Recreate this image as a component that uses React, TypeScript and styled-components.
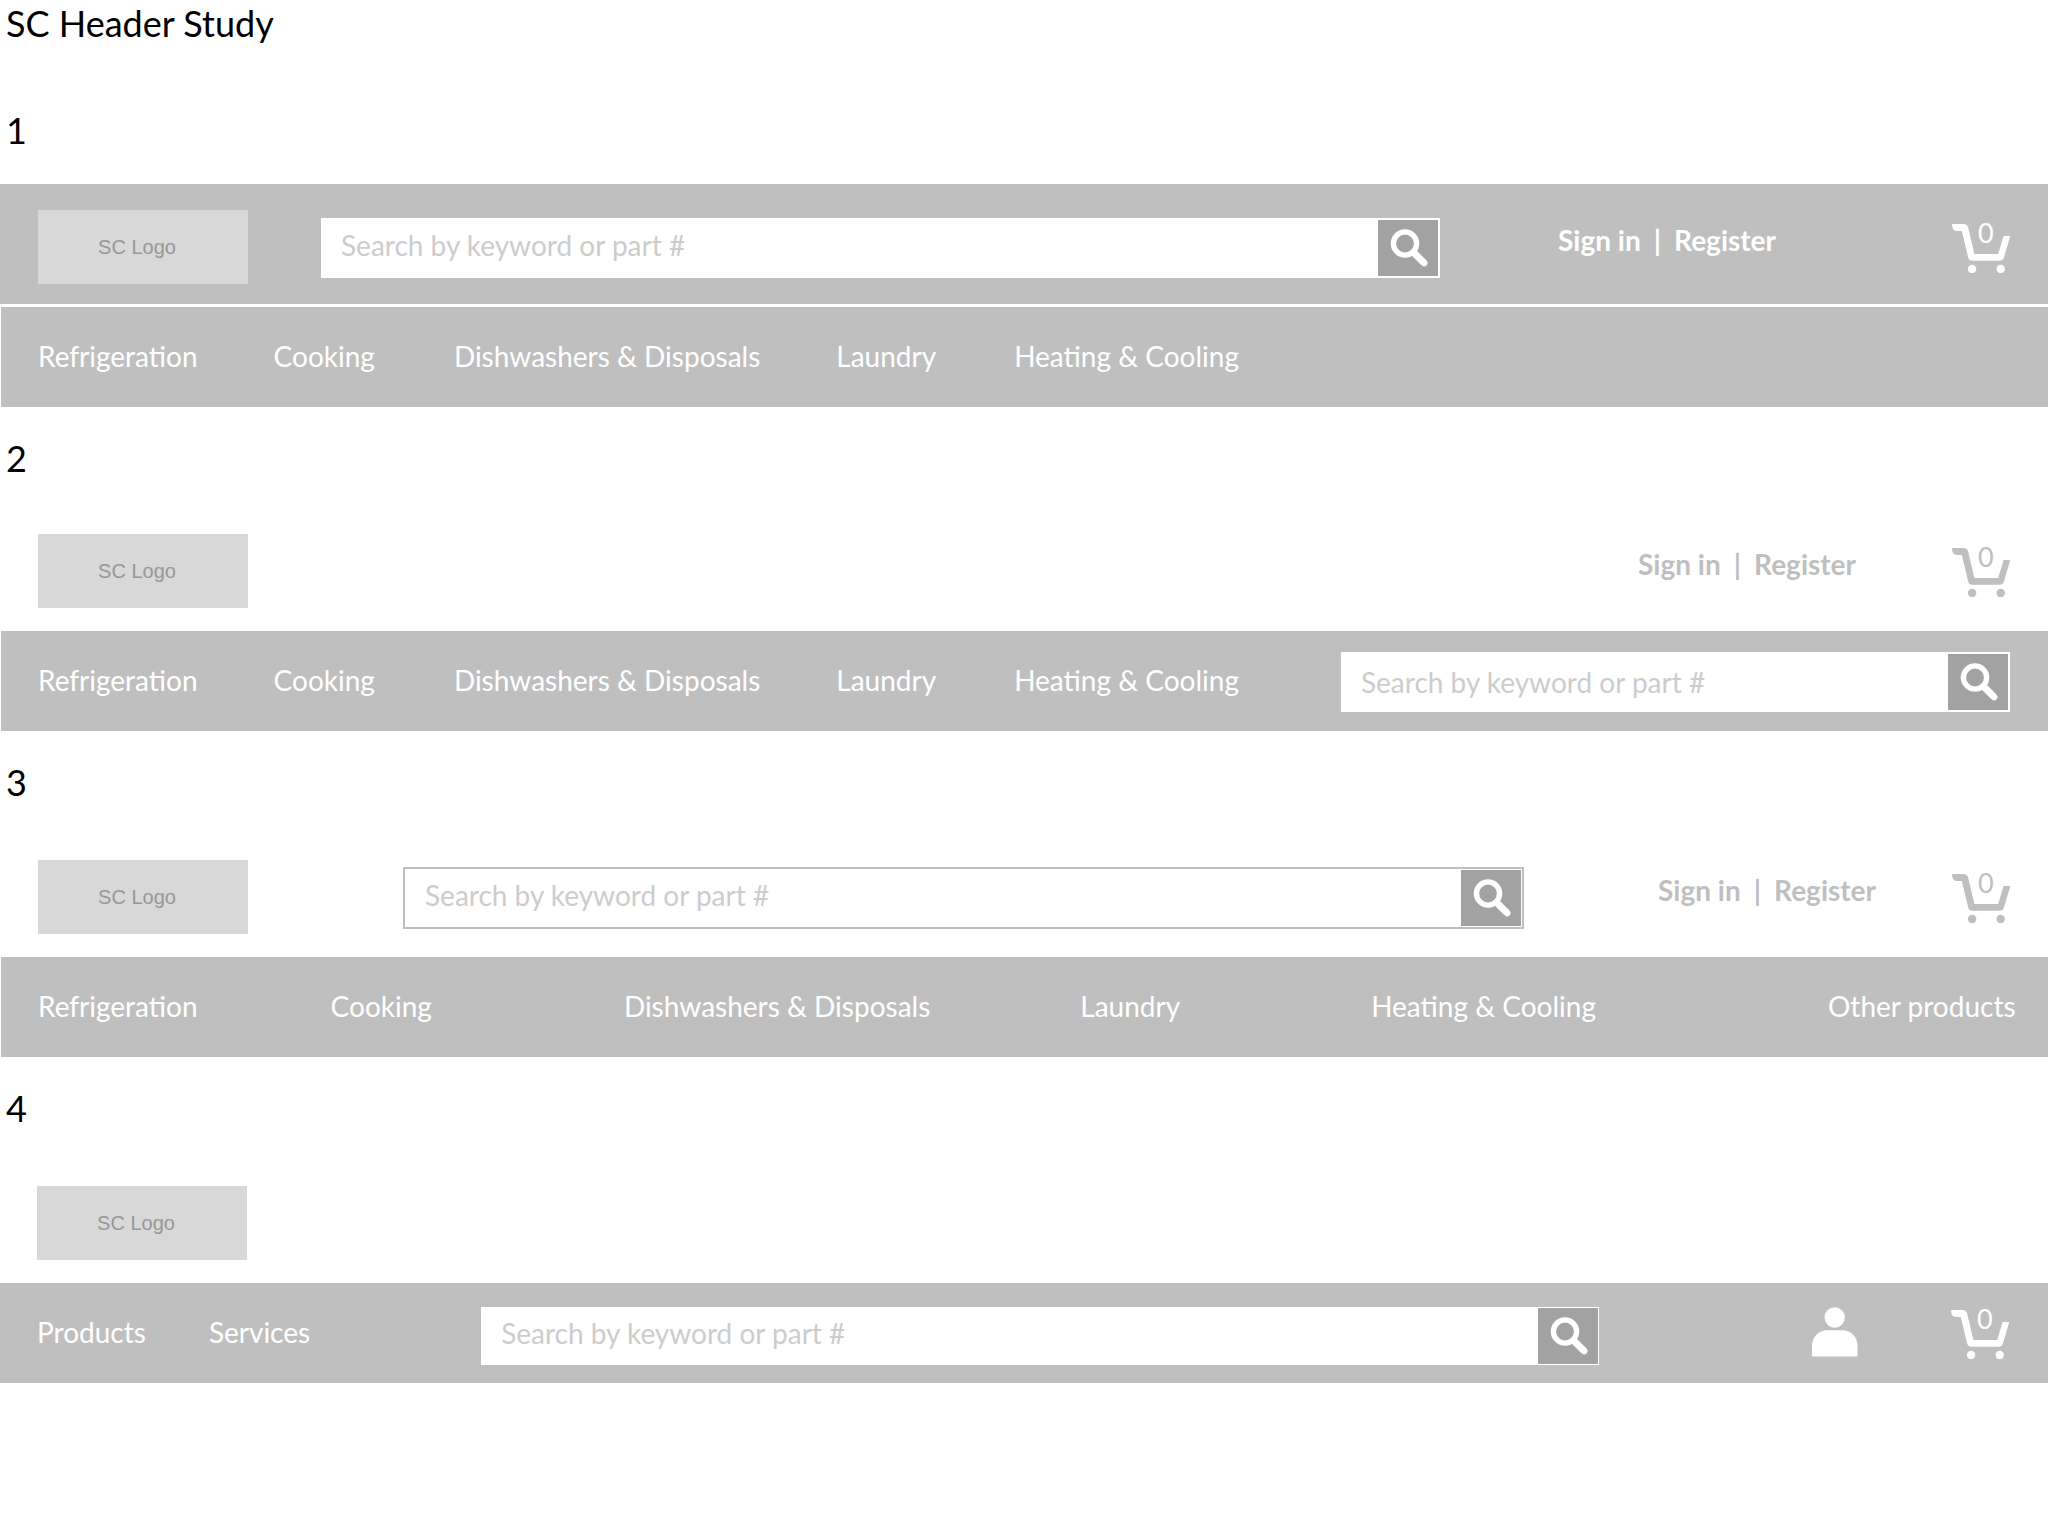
import React from "react";
import styled, { createGlobalStyle } from "styled-components";

const GlobalStyle = createGlobalStyle`
  *, *::before, *::after { box-sizing: border-box; }
  body {
    margin: 0;
    background: #ffffff;
    color: #000000;
    font-family: Lato, Carlito, "Open Sans", sans-serif;
  }
`;

const GREY = "#bfbfbf";
const WHITE = "#ffffff";

const Page = styled.main`
  display: flex;
  flex-direction: column;
  padding-bottom: 40px;
`;

const Title = styled.h1`
  margin: 0;
  padding-left: 6px;
  font-size: 36px;
  line-height: 46px;
  font-weight: 400;
`;

const Study = styled.section<{ $lead: number }>`
  padding-top: ${(p) => p.$lead}px;
`;

const StudyNumber = styled.h2<{ $after: number }>`
  margin: 0 0 ${(p) => p.$after}px;
  padding-left: 6px;
  font-size: 36px;
  line-height: 48px;
  font-weight: 400;
`;

const TopRow = styled.header<{ $filled?: boolean; $flush?: boolean }>`
  display: flex;
  align-items: center;
  height: 120px;
  padding: 26px 38px 20px ${(p) => (p.$flush ? 37 : 38)}px;
  color: ${(p) => (p.$filled ? WHITE : GREY)};
  background: ${(p) => (p.$filled ? GREY : "transparent")};
`;

const Logo = styled.a`
  display: flex;
  flex: none;
  align-items: center;
  justify-content: center;
  width: 210px;
  height: 74px;
  padding-right: 12px;
  background: #d8d8d8;
  color: #979797;
  font: 20px/24px "Liberation Sans", Arial, sans-serif;
  text-decoration: none;
`;

type FormVariant = "plain" | "outlined" | "compact";

const formShape = {
  plain: { height: 60, top: 2, padding: 2, border: "none" },
  outlined: { height: 62, top: 2, padding: 1, border: `2px solid ${GREY}` },
  compact: { height: 58, top: 6, padding: 1, border: "none" },
};

const SearchForm = styled.form<{ $left: number; $right: number; $variant: FormVariant }>`
  display: flex;
  flex: 1;
  min-width: 0;
  height: ${(p) => formShape[p.$variant].height}px;
  margin: ${(p) => formShape[p.$variant].top}px ${(p) => p.$right}px 0 ${(p) => p.$left}px;
  padding: ${(p) => formShape[p.$variant].padding}px;
  padding-left: 0;
  background: ${WHITE};
  border: ${(p) => formShape[p.$variant].border};
`;

const SearchInput = styled.input<{ $low?: boolean }>`
  flex: 1;
  min-width: 0;
  padding: ${(p) => (p.$low ? "0 20px" : "0 20px 6px")};
  border: 0;
  outline: 0;
  background: transparent;
  color: #666666;
  font: inherit;
  font-size: 28px;
  &::placeholder {
    color: #cccccc;
    opacity: 1;
  }
`;

const SearchButton = styled.button`
  flex: none;
  width: 60px;
  padding: 0;
  border: 0;
  background: #a2a2a2;
  color: ${WHITE};
  cursor: pointer;
  svg {
    display: block;
  }
`;

const Account = styled.div<{ $right: number }>`
  display: flex;
  gap: 13px;
  margin-left: auto;
  margin-right: ${(p) => p.$right}px;
  padding-bottom: 14px;
  font-size: 28px;
  line-height: 36px;
  font-weight: 700;
  white-space: nowrap;
  a {
    color: inherit;
    text-decoration: none;
  }
`;

const CartLink = styled.a`
  position: relative;
  flex: none;
  margin-top: 3px;
  color: inherit;
  text-decoration: none;
  svg {
    display: block;
  }
`;

const CartCount = styled.span`
  position: absolute;
  left: 26px;
  top: -9px;
  font-size: 27px;
  line-height: 36px;
`;

const ProfileLink = styled.a`
  margin: 0 93px 2px 0;
  color: inherit;
  svg {
    display: block;
  }
`;

const NavBar = styled.div<{ $flush?: boolean }>`
  display: flex;
  align-items: center;
  height: 100px;
  margin-top: 3px;
  margin-left: ${(p) => (p.$flush ? 0 : 1)}px;
  padding: 0 ${(p) => (p.$flush ? 39 : 38)}px 0 37px;
  background: ${GREY};
  color: ${WHITE};
`;

const NavList = styled.ul`
  display: flex;
  margin: 0;
  padding: 0 0 3px;
  list-style: none;
`;

const NavItem = styled.li<{ $before: number }>`
  margin-left: ${(p) => p.$before}px;
  font-size: 28px;
  line-height: 36px;
  white-space: nowrap;
  a {
    color: inherit;
    text-decoration: none;
  }
`;

const MagnifierIcon = () => (
  <svg width="60" height="56" viewBox="0 0 60 56" fill="none" stroke="currentColor" aria-hidden="true">
    <circle cx="27" cy="23.5" r="11.6" strokeWidth="5.4" />
    <path d="M36 33L45.6 42.4" strokeWidth="7" />
    <path d="M45.8 42.6L46.2 43" strokeWidth="6.6" strokeLinecap="round" />
  </svg>
);

const CartIcon = () => (
  <svg width="58" height="49" viewBox="0 0 58 49" fill="currentColor" aria-hidden="true">
    <path d="M0 0H11.5Q15.3 0 16.2 3.8L22.4 30H46.2L51.6 12H58.3L51.9 33.6Q51 36.8 47.5 36.8H20.4Q17 36.8 16.1 33.2L9.8 6.9H4.5Q0 6.9 0 0Z" />
    <circle cx="20.1" cy="45" r="4.2" />
    <circle cx="48.7" cy="45" r="4.2" />
  </svg>
);

const PersonIcon = () => (
  <svg width="46" height="50" viewBox="0 0 46 50" fill="currentColor" aria-hidden="true">
    <circle cx="22.7" cy="10.5" r="10.2" />
    <path d="M15.5 23.3H30C39 23.3 45.5 30 45.5 39V48.5Q45.5 49.5 44.5 49.5H1Q0 49.5 0 48.5V39C0 30 6.5 23.3 15.5 23.3Z" />
  </svg>
);

type SearchProps = {
  id: string;
  left: number;
  right: number;
  variant?: FormVariant;
  low?: boolean;
};

const Search = ({ id, left, right, variant = "plain", low }: SearchProps) => (
  <SearchForm
    role="search"
    $left={left}
    $right={right}
    $variant={variant}
    onSubmit={(e) => e.preventDefault()}
  >
    <SearchInput
      id={id}
      type="text"
      aria-label="Search"
      placeholder="Search by keyword or part #"
      $low={low}
    />
    <SearchButton type="submit" aria-label="Search">
      <MagnifierIcon />
    </SearchButton>
  </SearchForm>
);

const SignIn = ({ right }: { right: number }) => (
  <Account $right={right}>
    <a href="#signin">Sign in</a>
    <span>|</span>
    <a href="#register">Register</a>
  </Account>
);

const Cart = () => (
  <CartLink href="#cart" aria-label="Cart">
    <CartIcon />
    <CartCount>0</CartCount>
  </CartLink>
);

const Nav = ({ items }: { items: [string, number][] }) => (
  <nav>
    <NavList>
      {items.map(([label, before]) => (
        <NavItem key={label} $before={before}>
          <a href="#products">{label}</a>
        </NavItem>
      ))}
    </NavList>
  </nav>
);

const categories: [string, number][] = [
  ["Refrigeration", 0],
  ["Cooking", 76],
  ["Dishwashers & Disposals", 79],
  ["Laundry", 76],
  ["Heating & Cooling", 78],
];

const spreadCategories: [string, number][] = [
  ["Refrigeration", 0],
  ["Cooking", 133],
  ["Dishwashers & Disposals", 192],
  ["Laundry", 150],
  ["Heating & Cooling", 191],
  ["Other products", 232],
];

export default function App() {
  return (
    <>
      <GlobalStyle />
      <Page>
        <Title>SC Header Study</Title>

        <Study $lead={60}>
          <StudyNumber $after={30}>1</StudyNumber>
          <TopRow $filled>
            <Logo href="#home">SC Logo</Logo>
            <Search id="search-1" left={73} right={118} />
            <SignIn right={176} />
            <Cart />
          </TopRow>
          <NavBar>
            <Nav items={categories} />
          </NavBar>
        </Study>

        <Study $lead={27}>
          <StudyNumber $after={26}>2</StudyNumber>
          <TopRow>
            <Logo href="#home">SC Logo</Logo>
            <SignIn right={96} />
            <Cart />
          </TopRow>
          <NavBar>
            <Nav items={categories} />
            <Search id="search-2" left={102} right={0} low />
          </NavBar>
        </Study>

        <Study $lead={27}>
          <StudyNumber $after={28}>3</StudyNumber>
          <TopRow>
            <Logo href="#home">SC Logo</Logo>
            <Search id="search-3" left={155} right={134} variant="outlined" />
            <SignIn right={76} />
            <Cart />
          </TopRow>
          <NavBar>
            <Nav items={spreadCategories} />
          </NavBar>
        </Study>

        <Study $lead={27}>
          <StudyNumber $after={28}>4</StudyNumber>
          <TopRow $flush>
            <Logo href="#home">SC Logo</Logo>
          </TopRow>
          <NavBar $flush>
            <Nav items={[["Products", 0], ["Services", 63]]} />
            <Search id="search-4" left={171} right={213} variant="compact" />
            <ProfileLink href="#account" aria-label="Account">
              <PersonIcon />
            </ProfileLink>
            <Cart />
          </NavBar>
        </Study>
      </Page>
    </>
  );
}
